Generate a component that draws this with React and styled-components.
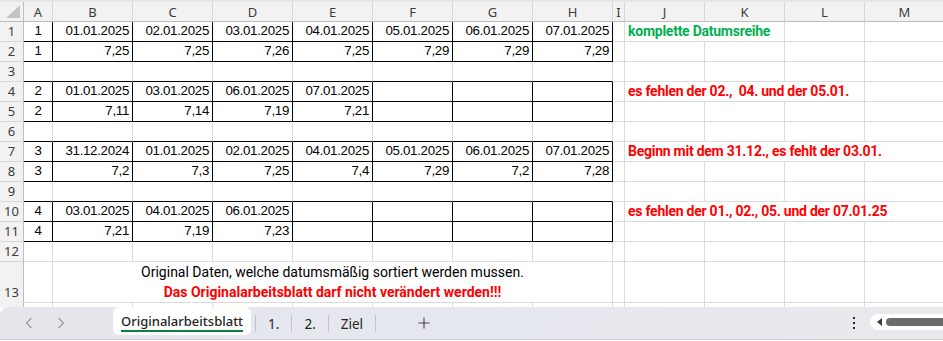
import React from 'react';
import styled, { createGlobalStyle } from 'styled-components';

const GlobalStyle = createGlobalStyle`
  html, body {
    margin: 0;
    padding: 0;
    background: #ffffff;
    overflow: hidden;
  }
`;

const COLUMNS = [
  { key: 'A', width: 29 },
  { key: 'B', width: 80 },
  { key: 'C', width: 80 },
  { key: 'D', width: 80 },
  { key: 'E', width: 80 },
  { key: 'F', width: 80 },
  { key: 'G', width: 80 },
  { key: 'H', width: 80 },
  { key: 'I', width: 12 },
  { key: 'J', width: 80 },
  { key: 'K', width: 80 },
  { key: 'L', width: 80 },
  { key: 'M', width: 80 },
];

const TEMPLATE = `24px ${COLUMNS.map((c) => `${c.width}px`).join(' ')}`;
const BOXED_KEYS = ['A', 'B', 'C', 'D', 'E', 'F', 'G', 'H'];
const GRID = '#dcdcdc';

const dates1 = ['01.01.2025', '02.01.2025', '03.01.2025', '04.01.2025', '05.01.2025', '06.01.2025', '07.01.2025'];

function rowValues(a, list) {
  const cells = { A: a };
  list.forEach((v, i) => {
    cells[BOXED_KEYS[i + 1]] = v;
  });
  return cells;
}

const ROWS = [
  { n: 1, boxed: true, cells: rowValues('1', dates1), note: { text: 'komplette Datumsreihe', tone: 'green', span: 2 } },
  { n: 2, boxed: true, cells: rowValues('1', ['7,25', '7,25', '7,26', '7,25', '7,29', '7,29', '7,29']) },
  { n: 3, cells: {} },
  {
    n: 4,
    boxed: true,
    cells: rowValues('2', ['01.01.2025', '03.01.2025', '06.01.2025', '07.01.2025']),
    note: { text: 'es fehlen der 02.,  04. und der 05.01.', tone: 'red', span: 3 },
  },
  { n: 5, boxed: true, cells: rowValues('2', ['7,11', '7,14', '7,19', '7,21']) },
  { n: 6, cells: {} },
  {
    n: 7,
    boxed: true,
    cells: rowValues('3', ['31.12.2024', '01.01.2025', '02.01.2025', '04.01.2025', '05.01.2025', '06.01.2025', '07.01.2025']),
    note: { text: 'Beginn mit dem 31.12., es fehlt der 03.01.', tone: 'red', span: 4 },
  },
  { n: 8, boxed: true, cells: rowValues('3', ['7,2', '7,3', '7,25', '7,4', '7,29', '7,2', '7,28']) },
  { n: 9, cells: {} },
  {
    n: 10,
    boxed: true,
    cells: rowValues('4', ['03.01.2025', '04.01.2025', '06.01.2025']),
    note: { text: 'es fehlen der 01., 02., 05. und der 07.01.25', tone: 'red', span: 4 },
  },
  { n: 11, boxed: true, cells: rowValues('4', ['7,21', '7,19', '7,23']) },
  { n: 12, cells: {} },
];

const Frame = styled.div`
  width: 943px;
  height: 341px;
  display: flex;
  flex-direction: column;
  overflow: hidden;
  background: #ffffff;
`;

const Sheet = styled.div`
  height: 307px;
  overflow: hidden;
  flex: none;
`;

const GridRow = styled.div`
  display: grid;
  grid-template-columns: ${TEMPLATE};
  height: ${({ $height }) => $height}px;
`;

const HeaderRow = styled(GridRow)`
  background: #f2f2f2;
  border-top: 2px solid #e6e6e6;
  box-sizing: border-box;
`;

const Corner = styled.div`
  border-right: 1px solid #bdbdbd;
  border-bottom: 1px solid #bdbdbd;
  display: flex;
  align-items: flex-end;
  justify-content: flex-end;
  padding: 0 3px 3px 0;

  svg {
    display: block;
  }
`;

const ColHead = styled.div`
  border-right: 1px solid #d6d6d6;
  border-bottom: 1px solid #bdbdbd;
  display: flex;
  align-items: center;
  justify-content: center;
  font-family: 'Noto Sans', 'Open Sans', sans-serif;
  font-size: 13px;
  color: #3c3c3c;
`;

const RowHead = styled.div`
  background: #f2f2f2;
  border-right: 1px solid #bdbdbd;
  border-bottom: 1px solid #d6d6d6;
  display: flex;
  align-items: flex-end;
  justify-content: center;
  padding-bottom: 1px;
  box-sizing: border-box;
  font-family: 'Noto Sans', 'Open Sans', sans-serif;
  font-size: 13px;
  line-height: 18px;
  color: #3c3c3c;
`;

const Cell = styled.div`
  box-sizing: border-box;
  min-width: 0;
  border-right: 1px solid ${({ $boxRight }) => ($boxRight ? '#000000' : GRID)};
  border-bottom: 1px solid ${({ $boxBottom }) => ($boxBottom ? '#000000' : GRID)};
  display: flex;
  align-items: flex-end;
  justify-content: ${({ $align }) =>
    $align === 'center' ? 'center' : $align === 'right' ? 'flex-end' : 'flex-start'};
  padding: 0 3px 1px 3px;
  font-family: 'Liberation Sans', Arial, sans-serif;
  font-size: 13.3px;
  letter-spacing: -0.3px;
  line-height: 18px;
  color: #000000;
  white-space: pre;
  grid-column: ${({ $span }) => ($span ? `span ${$span}` : 'auto')};
`;

const Note = styled(Cell)`
  font-family: Roboto, 'Noto Sans', sans-serif;
  font-weight: 700;
  font-size: 14px;
  letter-spacing: -0.25px;
  color: ${({ $tone }) => ($tone === 'green' ? '#00b050' : '#ff0000')};
`;

const Caption = styled(Cell)`
  flex-direction: column;
  align-items: center;
  justify-content: flex-end;
  padding-bottom: 0;
  font-family: Roboto, 'Noto Sans', sans-serif;
  font-size: 14px;
  letter-spacing: 0;
  line-height: 20px;
`;

const CaptionLine = styled.div`
  color: ${({ $alert }) => ($alert ? '#ff0000' : '#000000')};
  font-weight: ${({ $alert }) => ($alert ? 700 : 400)};
`;

const Footer = styled.div`
  flex: 1;
  display: flex;
  flex-direction: column;
  background: #ffffff;
`;

const TabBar = styled.div`
  height: 32px;
  display: flex;
  align-items: stretch;
  background: linear-gradient(100deg, #e4e6ec 0%, #e6e8ef 55%, #e9e9ed 100%);
  border-radius: 8px 0 0 0;
  border-bottom: 1px solid #cfd0d4;
`;

const NavGroup = styled.div`
  width: 113px;
  display: flex;
  align-items: center;
  padding-left: 22px;
  gap: 18px;
  box-sizing: border-box;
`;

const NavButton = styled.span`
  width: 14px;
  display: flex;
  justify-content: center;

  svg {
    display: block;
  }
`;

const ActiveTab = styled.div`
  display: flex;
  flex-direction: column;
  align-items: center;
  justify-content: center;
  padding: 0 8px;
  height: 28px;
  background: #ffffff;
  border-radius: 6px;
  font-family: 'Noto Sans', 'Open Sans', sans-serif;
  font-weight: 500;
  font-size: 13px;
  color: #242424;
`;

const ActiveLabel = styled.span`
  line-height: 18px;
  padding-top: 2px;
  border-bottom: 2px solid #107c41;
`;

const TabSeparator = styled.span`
  width: 1px;
  height: 17px;
  background: #c2c3c7;
  align-self: center;
  margin-left: ${({ $gap }) => $gap || 0}px;
`;

const Tab = styled.div`
  display: flex;
  align-items: center;
  padding: 2px 12px 0;
  font-family: 'Noto Sans', 'Open Sans', sans-serif;
  font-size: 13.5px;
  color: #242424;

  &:first-of-type {
    padding: 2px 11px 0;
  }
`;

const AddButton = styled.div`
  display: flex;
  align-items: center;
  margin-left: 42px;

  svg {
    display: block;
  }
`;

const Spacer = styled.div`
  flex: 1;
`;

const MoreDots = styled.div`
  display: flex;
  flex-direction: column;
  justify-content: center;
  gap: 3px;
  width: 3px;
  margin-right: 14px;

  span {
    width: 2px;
    height: 2px;
    background: #2b2b2b;
  }
`;

const ScrollTrack = styled.div`
  align-self: center;
  width: 73px;
  height: 16px;
  background: #ffffff;
  border-radius: 8px 0 0 8px;
  display: flex;
  align-items: center;
  padding-left: 7px;
  gap: 4px;
  margin-bottom: 3px;
  box-sizing: border-box;

  svg {
    display: block;
  }
`;

const ScrollThumb = styled.div`
  flex: 1;
  height: 8px;
  background: #6b6b6b;
  border-radius: 4px 0 0 4px;
`;

const BottomEdge = styled.div`
  height: 1px;
  background: #ffffff;
`;

function ColumnHeader() {
  return (
    <HeaderRow $height={22}>
      <Corner>
        <svg width="14" height="13" viewBox="0 0 14 13">
          <polygon points="14,0 14,13 0,13" fill="#c4c4c4" />
        </svg>
      </Corner>
      {COLUMNS.map((c) => (
        <ColHead key={c.key}>{c.key}</ColHead>
      ))}
    </HeaderRow>
  );
}

function DataRow({ row, nextBoxed }) {
  const cells = [];
  let skip = 0;
  COLUMNS.forEach((c) => {
    if (skip > 0) {
      skip -= 1;
      return;
    }
    const boxedCol = BOXED_KEYS.includes(c.key);
    if (c.key === 'J' && row.note) {
      skip = row.note.span - 1;
      cells.push(
        <Note key={c.key} $span={row.note.span} $tone={row.note.tone} $align="left">
          {row.note.text}
        </Note>
      );
      return;
    }
    cells.push(
      <Cell
        key={c.key}
        $align={c.key === 'A' ? 'center' : 'right'}
        $boxRight={row.boxed && boxedCol}
        $boxBottom={boxedCol && (row.boxed || nextBoxed)}
      >
        {row.cells[c.key] || ''}
      </Cell>
    );
  });

  return (
    <GridRow $height={20}>
      <RowHead>{row.n}</RowHead>
      {cells}
    </GridRow>
  );
}

function CaptionRow() {
  return (
    <GridRow $height={40}>
      <RowHead>13</RowHead>
      <Cell />
      <Caption $span={7}>
        <CaptionLine>Original Daten, welche datumsmäßig sortiert werden mussen.</CaptionLine>
        <CaptionLine $alert>Das Originalarbeitsblatt darf nicht verändert werden!!!</CaptionLine>
      </Caption>
      {COLUMNS.slice(8).map((c) => (
        <Cell key={c.key} />
      ))}
    </GridRow>
  );
}

function FillerRow() {
  return (
    <GridRow $height={20}>
      <RowHead />
      {COLUMNS.map((c) => (
        <Cell key={c.key} />
      ))}
    </GridRow>
  );
}

function SheetTabs() {
  return (
    <Footer>
      <TabBar>
        <NavGroup>
          <NavButton>
            <svg width="8" height="12" viewBox="0 0 8 12">
              <path d="M6.5 1 L1.5 6 L6.5 11" fill="none" stroke="#9b9b9b" strokeWidth="1.2" />
            </svg>
          </NavButton>
          <NavButton>
            <svg width="8" height="12" viewBox="0 0 8 12">
              <path d="M1.5 1 L6.5 6 L1.5 11" fill="none" stroke="#9b9b9b" strokeWidth="1.2" />
            </svg>
          </NavButton>
        </NavGroup>
        <ActiveTab>
          <ActiveLabel>Originalarbeitsblatt</ActiveLabel>
        </ActiveTab>
        <TabSeparator $gap={4} />
        <Tab>1.</Tab>
        <TabSeparator />
        <Tab>2.</Tab>
        <TabSeparator />
        <Tab>Ziel</Tab>
        <TabSeparator />
        <AddButton>
          <svg width="12" height="12" viewBox="0 0 12 12">
            <path d="M6 0.5 V11.5 M0.5 6 H11.5" stroke="#444" strokeWidth="1.1" />
          </svg>
        </AddButton>
        <Spacer />
        <MoreDots>
          <span />
          <span />
          <span />
        </MoreDots>
        <ScrollTrack>
          <svg width="5" height="8" viewBox="0 0 5 8">
            <polygon points="5,0 5,8 0,4" fill="#3a3a3a" />
          </svg>
          <ScrollThumb />
        </ScrollTrack>
      </TabBar>
      <BottomEdge />
    </Footer>
  );
}

export default function App() {
  return (
    <>
      <GlobalStyle />
      <Frame>
        <Sheet>
          <ColumnHeader />
          {ROWS.map((row, i) => (
            <DataRow key={row.n} row={row} nextBoxed={Boolean(ROWS[i + 1] && ROWS[i + 1].boxed)} />
          ))}
          <CaptionRow />
          <FillerRow />
        </Sheet>
        <SheetTabs />
      </Frame>
    </>
  );
}
